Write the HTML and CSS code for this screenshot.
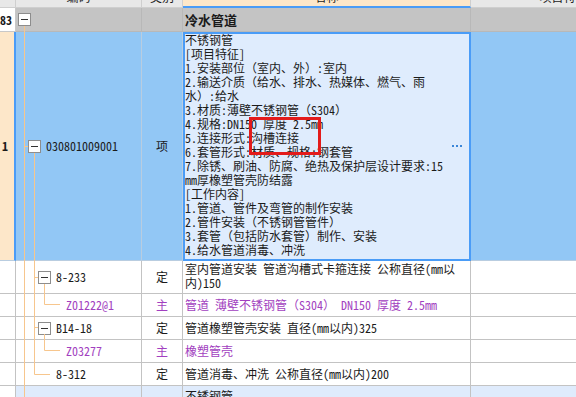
FILE: index.html
```html
<!DOCTYPE html>
<html lang="zh-CN">
<head>
    <meta charset="UTF-8">
    <title>分部分项</title>
    <link rel="stylesheet" href="styles.css">
</head>
<body>
<div class="sheet">
    <div class="row head">
        <div class="c num"></div>
        <div class="c"><span class="cap">编码</span></div>
        <div class="c"><span class="cap">类别</span></div>
        <div class="c sel"><span class="cap">名称</span></div>
        <div class="c"><span class="cap">项目特征</span></div>
    </div>

    <div class="row group">
        <div class="c num">83</div>
        <div class="c code lv0"><span class="tog"></span></div>
        <div class="c type"></div>
        <div class="c name">冷水管道</div>
        <div class="c"></div>
    </div>

    <div class="row item">
        <div class="c num">1</div>
        <div class="c code lv1"><span class="tog"></span>030801009001</div>
        <div class="c type">项</div>
        <div class="c name">
            <div class="lines">
                <div>不锈钢管</div>
                <div>[项目特征]</div>
                <div>1.安装部位（室内、外）:室内</div>
                <div>2.输送介质（给水、排水、热媒体、燃气、雨</div>
                <div>水）:给水</div>
                <div>3.材质:薄壁不锈钢管（S304）</div>
                <div>4.规格:DN150 厚度 2.5mm</div>
                <div>5.连接形式:沟槽连接</div>
                <div>6.套管形式:材质、规格:钢套管</div>
                <div>7.除锈、刷油、防腐、绝热及保护层设计要求:15</div>
                <div>mm厚橡塑管壳防结露</div>
                <div>[工作内容]</div>
                <div>1.管道、管件及弯管的制作安装</div>
                <div>2.管件安装（不锈钢管管件）</div>
                <div>3.套管（包括防水套管）制作、安装</div>
                <div>4.给水管道消毒、冲洗</div>
            </div>
            <span class="more"><i></i><i></i><i></i></span>
            <span class="mark"></span>
        </div>
        <div class="c"></div>
    </div>

    <div class="row sub tall">
        <div class="c num"></div>
        <div class="c code lv2"><span class="tog"></span>8-233</div>
        <div class="c type">定</div>
        <div class="c name">室内管道安装 管道沟槽式卡箍连接 公称直径(mm以<br>内)150</div>
        <div class="c"></div>
    </div>

    <div class="row sub mat">
        <div class="c num"></div>
        <div class="c code lv3">Z01222@1</div>
        <div class="c type">主</div>
        <div class="c name">管道 薄壁不锈钢管（S304） DN150 厚度 2.5mm</div>
        <div class="c"></div>
    </div>

    <div class="row sub">
        <div class="c num"></div>
        <div class="c code lv2"><span class="tog"></span>B14-18</div>
        <div class="c type">定</div>
        <div class="c name">管道橡塑管壳安装 直径(mm以内)325</div>
        <div class="c"></div>
    </div>

    <div class="row sub mat">
        <div class="c num"></div>
        <div class="c code lv3">Z03277</div>
        <div class="c type">主</div>
        <div class="c name">橡塑管壳</div>
        <div class="c"></div>
    </div>

    <div class="row sub">
        <div class="c num"></div>
        <div class="c code lv2t">8-312</div>
        <div class="c type">定</div>
        <div class="c name">管道消毒、冲洗 公称直径(mm以内)200</div>
        <div class="c"></div>
    </div>

    <div class="row next">
        <div class="c num"></div>
        <div class="c code"></div>
        <div class="c type"></div>
        <div class="c name">不锈钢管</div>
        <div class="c"></div>
    </div>

    <!-- 树形连线 -->
    <svg class="tree" width="141" height="397" viewBox="0 0 141 397">
        <path d="M24.5 26V397 M24 146.5H28 M34.5 153V374.5H50
                 M34 277.5H38 M44.5 284V304.5H60
                 M34 327.5H38 M44.5 334V350.5H60"
              fill="none" stroke="#f7c68d" stroke-width="1"/>
    </svg>
</div>
</body>
</html>
```

FILE: styles.css
```css
html,
body {
    margin: 0;
    padding: 0;
    overflow: hidden;
    background: #fff;
}

body {
    font-family: "Noto Sans Mono CJK SC", "Noto Sans CJK SC", sans-serif;
    font-size: 12px;
    line-height: 14px;
    color: #1b1b1b;
}

.sheet {
    position: relative;
    width: 657px;
}

.row {
    display: grid;
    grid-template-columns: 16px 126px 41px 288px 186px;
}

.c {
    box-sizing: border-box;
    border-right: 1px solid #c3c3c3;
    border-bottom: 1px solid #c3c3c3;
    display: flex;
    align-items: center;
    overflow: hidden;
    white-space: nowrap;
}

.type {
    justify-content: center;
}

.name {
    padding-left: 2px;
}

/* 表头 */
.head {
    height: 8px;
    background: #e8e8e8;
}

.head .c {
    align-items: flex-start;
    justify-content: center;
    border-color: #cfcfcf;
}

.head .cap {
    margin-top: -9px;
    line-height: 12px;
}

.head .c.sel {
    background: #fde7c9;
    border-bottom: 2px solid #4a9cf7;
}

/* 分部行 */
.group {
    height: 24px;
    background: #c4c4c4;
}

.group .c {
    border-color: #b8b8b8;
}

.group .num {
    background: #fff;
    font-weight: bold;
    border-color: #c8c8c8;
}

.group .name {
    font-weight: bold;
    font-size: 13px;
}

/* 清单行 */
.item {
    height: 229px;
    background: #92c7f5;
}

.item .c {
    border-color: #b9cde0;
}

.item .num {
    background: #fde7c9;
    border-right: 2px solid #4a9cf7;
    font-weight: bold;
    padding-left: 2px;
}

.item .name {
    position: relative;
    background: #dfecfd;
    outline: 2px solid #4a9cf7;
    outline-offset: -2px;
    justify-content: space-between;
    padding-right: 8px;
}

.lines {
    align-self: flex-start;
    padding-top: 1px;
}

.more {
    display: flex;
    gap: 2px;
}

.more i {
    width: 2px;
    height: 2px;
    background: #3b86d8;
}

.mark {
    position: absolute;
    left: 66px;
    top: 85px;
    width: 72px;
    height: 38px;
    box-sizing: border-box;
    border: 3px solid #e31b1b;
}

/* 定额 / 主材行 */
.sub {
    height: 23px;
    background: #fff;
}

.sub.tall {
    height: 33px;
}

.sub.tall .name {
    align-items: flex-start;
    padding-top: 1px;
}

.mat {
    color: #a23fc0;
}

.next {
    height: 100px;
    background: #dfebfc;
}

.next .num {
    background: #fff;
}

.next .name {
    align-items: flex-start;
    padding-top: 3px;
}

/* 树 */
.code {
    padding-left: 0;
}

.lv0 { padding-left: 2px; }
.lv1 { padding-left: 12px; }
.lv2 { padding-left: 22px; }
.lv2t { padding-left: 40px; }
.lv3 { padding-left: 50px; }

.tog {
    flex: none;
    width: 13px;
    height: 13px;
    box-sizing: border-box;
    border: 1px solid #8d8d8d;
    background: #fff;
    display: flex;
    align-items: center;
    justify-content: center;
    margin-right: 5px;
}

.tog::before {
    content: "";
    width: 7px;
    height: 1px;
    background: #333;
}

.tree {
    position: absolute;
    left: 0;
    top: 0;
    pointer-events: none;
}
```
